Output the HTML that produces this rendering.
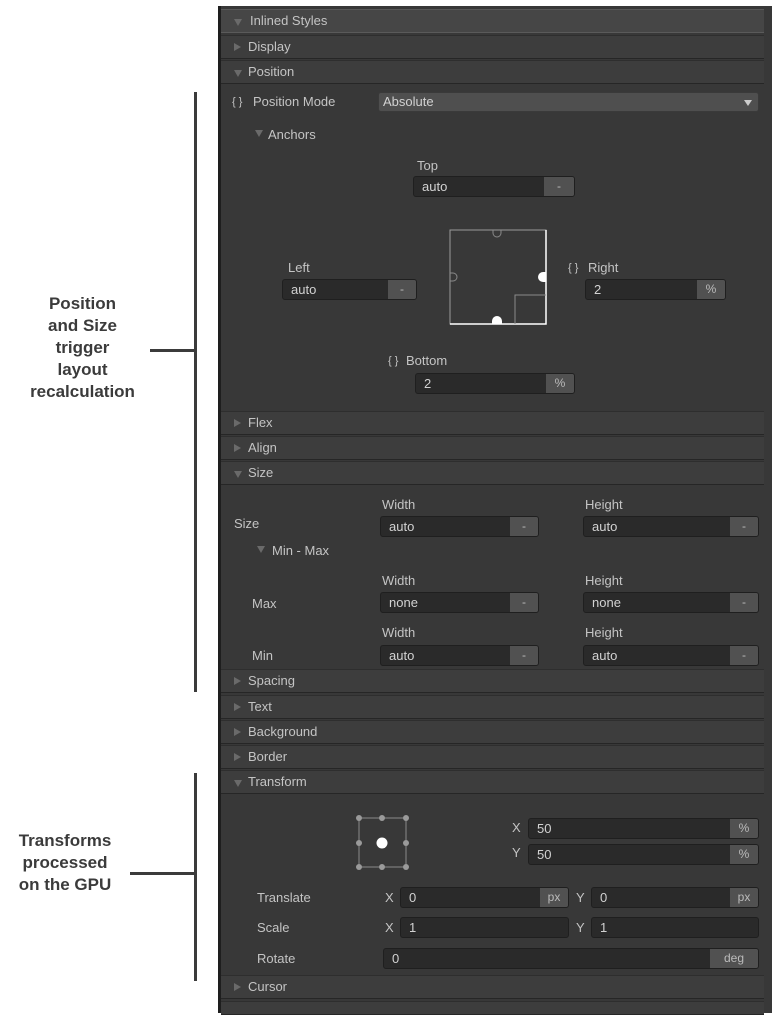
<!DOCTYPE html>
<html><head><meta charset="utf-8"><style>
*{margin:0;padding:0;box-sizing:border-box}
body{width:772px;height:1013px;background:#fff;position:relative;overflow:hidden;font-family:"Liberation Sans",sans-serif}
.p{position:absolute;left:218px;top:6px;width:554px;height:1007px;background:#383838;border-left:3px solid #1e1e1e}
.a{position:absolute}
.t{position:absolute;font-size:13px;color:#c4c4c4;line-height:16px;white-space:nowrap}
.h{position:absolute;left:221px;width:543px;height:24px;background:#3d3d3d;border-bottom:1px solid #262626;border-top:1px solid #2e2e2e}
.h span{position:absolute;left:27px;top:3px;font-size:13px;color:#c4c4c4}
.h i{position:absolute;left:13px;top:7px;width:0;height:0;border-top:4px solid transparent;border-bottom:4px solid transparent;border-left:7px solid #6a6a6a}
.h i.d{top:9px;border-left:4px solid transparent;border-right:4px solid transparent;border-top:7px solid #6a6a6a;border-bottom:0}
.f{position:absolute;height:21px;background:#2a2a2a;border:1px solid #1f1f1f;border-radius:3px;font-size:13px;color:#d2d2d2;padding-left:8px;line-height:19px;overflow:hidden}
.f b{position:absolute;right:0;top:0;height:19px;background:#515151;color:#bbb;font-weight:normal;text-align:center;line-height:18px;font-size:12px}
.L{position:absolute;font-weight:bold;font-size:17px;color:#3b3b3b;text-align:center;line-height:22px}
.ln{position:absolute;background:#3b3b3b}
</style></head><body>
<div class="ln" style="left:194px;top:92px;width:3px;height:600px"></div>
<div class="ln" style="left:150px;top:349px;width:46px;height:3px"></div>
<div class="L" style="left:0;top:293px;width:165px">Position<br>and Size<br>trigger<br>layout<br>recalculation</div>
<div class="ln" style="left:194px;top:773px;width:3px;height:208px"></div>
<div class="ln" style="left:130px;top:872px;width:66px;height:3px"></div>
<div class="L" style="left:0;top:830px;width:130px">Transforms<br>processed<br>on the GPU</div>

<div class="p"></div>
<div class="h" style="top:9px;background:#464646;border-top:1px solid #585858;border-bottom:1px solid #5a5a5a"><i class="d"></i><span style="left:29px">Inlined Styles</span></div>
<div class="h" style="top:35px"><i></i><span>Display</span></div>
<div class="h" style="top:60px"><i class="d"></i><span>Position</span></div>

<div class="t" style="left:232px;top:94px;font-size:11px">{ }</div>
<div class="t" style="left:253px;top:94px">Position Mode</div>
<div class="f" style="left:378px;top:92px;width:381px;height:20px;background:#4f4f4f;border-color:#3a3a3a;line-height:18px;padding-left:4px">Absolute<span style="position:absolute;right:6px;top:7px;border-left:4px solid transparent;border-right:4px solid transparent;border-top:6px solid #ccc"></span></div>
<div class="a" style="left:255px;top:130px;border-left:4px solid transparent;border-right:4px solid transparent;border-top:7px solid #6a6a6a"></div>
<div class="t" style="left:268px;top:127px">Anchors</div>

<div class="t" style="left:417px;top:158px">Top</div>
<div class="f" style="left:413px;top:176px;width:162px">auto<b style="width:30px">-</b></div>
<div class="t" style="left:288px;top:260px">Left</div>
<div class="f" style="left:282px;top:279px;width:135px">auto<b style="width:28px">-</b></div>
<div class="t" style="left:568px;top:260px;font-size:11px">{ }</div>
<div class="t" style="left:588px;top:260px">Right</div>
<div class="f" style="left:585px;top:279px;width:141px">2<b style="width:28px">%</b></div>
<div class="t" style="left:388px;top:353px;font-size:11px">{ }</div>
<div class="t" style="left:406px;top:353px">Bottom</div>
<div class="f" style="left:415px;top:373px;width:160px">2<b style="width:28px">%</b></div>

<svg class="a" style="left:448px;top:228px" width="100" height="100">
<path d="M2 2H98V96H2Z" fill="none" stroke="#9a9a9a" stroke-width="1"/>
<path d="M98 2V96H2" fill="none" stroke="#fff" stroke-width="1.5"/>
<path d="M67 96V67H98" fill="none" stroke="#8a8a8a"/>
<path d="M45 2v3a4 4 0 0 0 8 0v-3" fill="none" stroke="#8a8a8a"/>
<path d="M2 45h3a4 4 0 0 1 0 8h-3" fill="none" stroke="#8a8a8a"/>
<path d="M98 44h-3a5 5 0 0 0 0 10h3Z" fill="#fff"/>
<path d="M44 96v-3a5 5 0 0 1 10 0v3Z" fill="#fff"/>
</svg>

<div class="h" style="top:411px"><i></i><span>Flex</span></div>
<div class="h" style="top:436px"><i></i><span>Align</span></div>
<div class="h" style="top:461px"><i class="d"></i><span>Size</span></div>

<div class="t" style="left:382px;top:497px">Width</div>
<div class="t" style="left:585px;top:497px">Height</div>
<div class="t" style="left:234px;top:516px">Size</div>
<div class="f" style="left:380px;top:516px;width:159px">auto<b style="width:28px">-</b></div>
<div class="f" style="left:583px;top:516px;width:176px">auto<b style="width:28px">-</b></div>
<div class="a" style="left:257px;top:546px;border-left:4px solid transparent;border-right:4px solid transparent;border-top:7px solid #6a6a6a"></div>
<div class="t" style="left:272px;top:543px">Min - Max</div>
<div class="t" style="left:382px;top:573px">Width</div>
<div class="t" style="left:585px;top:573px">Height</div>
<div class="t" style="left:252px;top:596px">Max</div>
<div class="f" style="left:380px;top:592px;width:159px">none<b style="width:28px">-</b></div>
<div class="f" style="left:583px;top:592px;width:176px">none<b style="width:28px">-</b></div>
<div class="t" style="left:382px;top:625px">Width</div>
<div class="t" style="left:585px;top:625px">Height</div>
<div class="t" style="left:252px;top:648px">Min</div>
<div class="f" style="left:380px;top:645px;width:159px">auto<b style="width:28px">-</b></div>
<div class="f" style="left:583px;top:645px;width:176px">auto<b style="width:28px">-</b></div>

<div class="h" style="top:669px"><i></i><span>Spacing</span></div>
<div class="h" style="top:695px"><i></i><span>Text</span></div>
<div class="h" style="top:720px"><i></i><span>Background</span></div>
<div class="h" style="top:745px"><i></i><span>Border</span></div>
<div class="h" style="top:770px"><i class="d"></i><span>Transform</span></div>

<svg class="a" style="left:350px;top:810px" width="64" height="64">
<path d="M9 8H56V57H9Z" fill="none" stroke="#8a8a8a"/>
<g fill="#9a9a9a"><circle cx="9" cy="8" r="3"/><circle cx="32" cy="8" r="3"/><circle cx="56" cy="8" r="3"/><circle cx="9" cy="33" r="3"/><circle cx="56" cy="33" r="3"/><circle cx="9" cy="57" r="3"/><circle cx="32" cy="57" r="3"/><circle cx="56" cy="57" r="3"/></g>
<circle cx="32" cy="33" r="5.5" fill="#fff"/>
</svg>
<div class="t" style="left:512px;top:820px">X</div>
<div class="f" style="left:528px;top:818px;width:231px">50<b style="width:28px">%</b></div>
<div class="t" style="left:512px;top:845px">Y</div>
<div class="f" style="left:528px;top:844px;width:231px">50<b style="width:28px">%</b></div>

<div class="t" style="left:257px;top:890px">Translate</div>
<div class="t" style="left:385px;top:890px">X</div>
<div class="f" style="left:400px;top:887px;width:169px">0<b style="width:28px">px</b></div>
<div class="t" style="left:576px;top:890px">Y</div>
<div class="f" style="left:591px;top:887px;width:168px">0<b style="width:28px">px</b></div>
<div class="t" style="left:257px;top:920px">Scale</div>
<div class="t" style="left:385px;top:920px">X</div>
<div class="f" style="left:400px;top:917px;width:169px">1</div>
<div class="t" style="left:576px;top:920px">Y</div>
<div class="f" style="left:591px;top:917px;width:168px">1</div>
<div class="t" style="left:257px;top:951px">Rotate</div>
<div class="f" style="left:383px;top:948px;width:376px">0<b style="width:48px">deg</b></div>

<div class="h" style="top:975px"><i></i><span>Cursor</span></div>
<div class="h" style="top:1001px;height:14px"></div>
</body></html>
